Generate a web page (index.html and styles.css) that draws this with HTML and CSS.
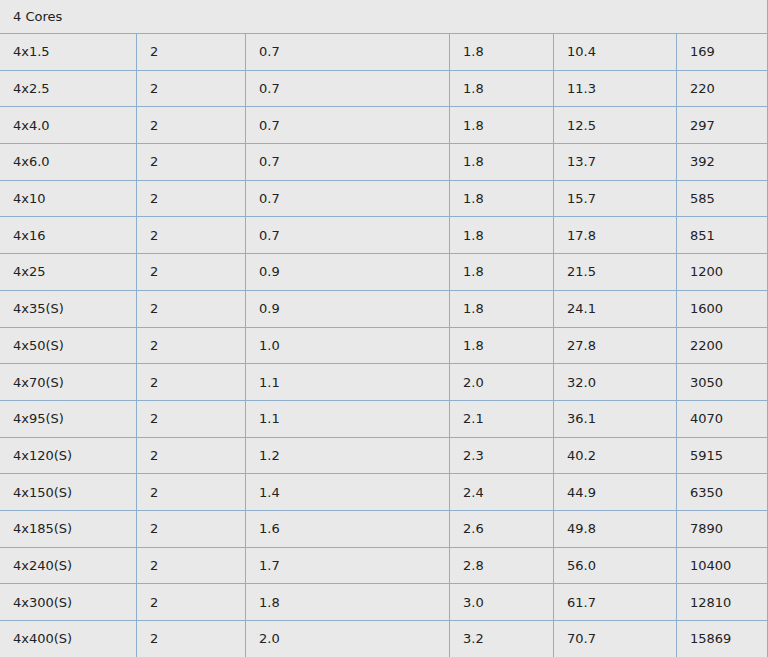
FILE: index.html
```html
<!DOCTYPE html>
<html>
<head>
<meta charset="utf-8">
<link rel="stylesheet" href="styles.css">
</head>
<body>
<div class="spec">
  <div class="cell head">4 Cores</div>
  <div class="cell">4x1.5</div><div class="cell">2</div><div class="cell">0.7</div><div class="cell">1.8</div><div class="cell">10.4</div><div class="cell">169</div>
  <div class="cell">4x2.5</div><div class="cell">2</div><div class="cell">0.7</div><div class="cell">1.8</div><div class="cell">11.3</div><div class="cell">220</div>
  <div class="cell">4x4.0</div><div class="cell">2</div><div class="cell">0.7</div><div class="cell">1.8</div><div class="cell">12.5</div><div class="cell">297</div>
  <div class="cell">4x6.0</div><div class="cell">2</div><div class="cell">0.7</div><div class="cell">1.8</div><div class="cell">13.7</div><div class="cell">392</div>
  <div class="cell">4x10</div><div class="cell">2</div><div class="cell">0.7</div><div class="cell">1.8</div><div class="cell">15.7</div><div class="cell">585</div>
  <div class="cell">4x16</div><div class="cell">2</div><div class="cell">0.7</div><div class="cell">1.8</div><div class="cell">17.8</div><div class="cell">851</div>
  <div class="cell">4x25</div><div class="cell">2</div><div class="cell">0.9</div><div class="cell">1.8</div><div class="cell">21.5</div><div class="cell">1200</div>
  <div class="cell">4x35(S)</div><div class="cell">2</div><div class="cell">0.9</div><div class="cell">1.8</div><div class="cell">24.1</div><div class="cell">1600</div>
  <div class="cell">4x50(S)</div><div class="cell">2</div><div class="cell">1.0</div><div class="cell">1.8</div><div class="cell">27.8</div><div class="cell">2200</div>
  <div class="cell">4x70(S)</div><div class="cell">2</div><div class="cell">1.1</div><div class="cell">2.0</div><div class="cell">32.0</div><div class="cell">3050</div>
  <div class="cell">4x95(S)</div><div class="cell">2</div><div class="cell">1.1</div><div class="cell">2.1</div><div class="cell">36.1</div><div class="cell">4070</div>
  <div class="cell">4x120(S)</div><div class="cell">2</div><div class="cell">1.2</div><div class="cell">2.3</div><div class="cell">40.2</div><div class="cell">5915</div>
  <div class="cell">4x150(S)</div><div class="cell">2</div><div class="cell">1.4</div><div class="cell">2.4</div><div class="cell">44.9</div><div class="cell">6350</div>
  <div class="cell">4x185(S)</div><div class="cell">2</div><div class="cell">1.6</div><div class="cell">2.6</div><div class="cell">49.8</div><div class="cell">7890</div>
  <div class="cell">4x240(S)</div><div class="cell">2</div><div class="cell">1.7</div><div class="cell">2.8</div><div class="cell">56.0</div><div class="cell">10400</div>
  <div class="cell">4x300(S)</div><div class="cell">2</div><div class="cell">1.8</div><div class="cell">3.0</div><div class="cell">61.7</div><div class="cell">12810</div>
  <div class="cell">4x400(S)</div><div class="cell">2</div><div class="cell">2.0</div><div class="cell">3.2</div><div class="cell">70.7</div><div class="cell">15869</div>
</div>
</body>
</html>
```

FILE: styles.css
```css
html, body {
  margin: 0;
  padding: 0;
  background: #e9e9e9;
}
.spec {
  display: grid;
  grid-template-columns: 137px 109px 204px 104px 123px 91px;
  grid-template-rows: 34px;
  grid-auto-rows: 36.7px;
  width: 768px;
  background: #e9e9e9;
  font-family: "DejaVu Sans", Verdana, sans-serif;
  font-size: 13px;
  color: #222;
}
.cell {
  box-sizing: border-box;
  display: flex;
  align-items: center;
  padding: 0 0 0 13px;
  border-right: 1px solid #8eaecb;
  border-bottom: 1px solid #8eaecb;
  white-space: nowrap;
}
.head {
  grid-column: 1 / -1;
  padding-top: 0;
}
```
